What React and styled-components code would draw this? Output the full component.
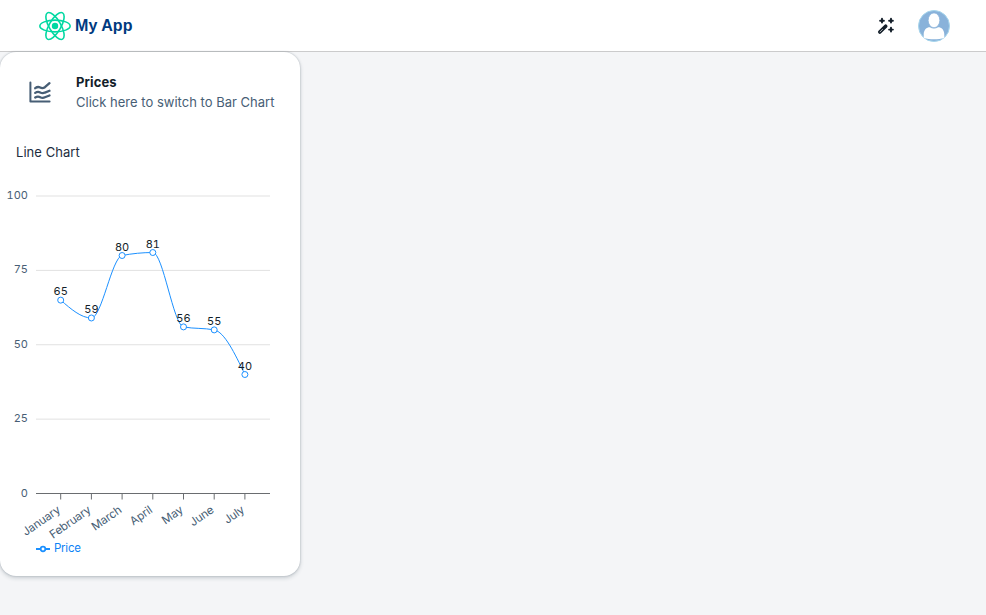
import React from "react";
import styled, { createGlobalStyle } from "styled-components";

const GlobalStyle = createGlobalStyle`
  *, *::before, *::after { box-sizing: border-box; }
  body {
    margin: 0;
    min-height: 100vh;
    background: #f4f5f7;
    color: #1d2d3e;
    font-family: Inter, "Liberation Sans", sans-serif;
  }
`;

const Bar = styled.header`
  display: flex;
  align-items: center;
  height: 52px;
  padding: 0 36px 0 39px;
  background: #fff;
  border-bottom: 1px solid #cbcbcc;
`;

const Brand = styled.div`
  display: flex;
  align-items: center;
  gap: 4px;
  margin-right: auto;
`;

const BrandTitle = styled.h1`
  margin: 0;
  color: #003a80;
  font: 700 16px/20px "Liberation Sans", Arial, sans-serif;
  letter-spacing: 0.05px;
`;

const ToolButton = styled.button`
  display: flex;
  padding: 0;
  margin-right: 23px;
  border: 0;
  background: none;
  color: #131e29;
`;

const Avatar = styled.svg`
  display: block;
  width: 32px;
  height: 32px;
`;

const Card = styled.section`
  width: 300px;
  height: 524px;
  overflow: hidden;
  background: #fff;
  border-radius: 16px;
  box-shadow: 0 0 2px rgba(34, 53, 72, 0.3), 0 2px 4px rgba(34, 53, 72, 0.2);
`;

const CardHeader = styled.div`
  display: flex;
  gap: 24px;
  height: 84px;
  padding: 20px 16px 0 28px;
`;

const HeaderIcon = styled.svg`
  display: block;
  width: 24px;
  height: 24px;
  margin-top: 8px;
`;

const CardTitle = styled.h2`
  margin: 0;
  color: #131e29;
  font-size: 13px;
  line-height: 20px;
  font-weight: 700;
  letter-spacing: 0.1px;
`;

const CardSubtitle = styled.div`
  color: #475e75;
  font-size: 13px;
  line-height: 20px;
  letter-spacing: 0.01px;
  white-space: nowrap;
`;

const ChartTitle = styled.div`
  padding: 6px 16px 0;
  color: #1d2d3e;
  font-size: 13px;
  line-height: 20px;
  letter-spacing: 0.05px;
`;

const Chart = styled.svg`
  display: block;
  width: 300px;
  height: 400px;
  font-size: 11px;
  font-feature-settings: "tnum";
`;

const GridLine = styled.line`
  stroke: #e1e1e1;
`;

const AxisLine = styled.line`
  stroke: #6a6d70;
`;

const AxisText = styled.text`
  fill: #475e75;
  text-anchor: end;
`;

const SlantedText = styled(AxisText)`
  font-size: 11.5px;
  letter-spacing: -0.15px;
`;

const ValueText = styled.text`
  fill: #131e29;
  text-anchor: middle;
`;

const Curve = styled.path`
  fill: none;
  stroke: #1b90ff;
`;

const Dot = styled.circle`
  fill: #fff;
  stroke: #1b90ff;
`;

const LegendText = styled.text`
  fill: #0f83f5;
  font-size: 11.5px;
  letter-spacing: -0.25px;
`;

const prices = [
  ["January", 65],
  ["February", 59],
  ["March", 80],
  ["April", 81],
  ["May", 56],
  ["June", 55],
  ["July", 40],
];

// Vertical position of the zero line, and the height of one unit of price.
const BASE = 331.5;
const SCALE = 2.975;
const points = prices.map(([label, value], i) => ({
  label,
  value,
  x: 60.7 + i * 30.7,
  y: BASE - value * SCALE,
}));

// Monotone cubic interpolation through the data points.
function monotonePath(pts) {
  const slopes = pts.slice(1).map((p, i) => (p.y - pts[i].y) / (p.x - pts[i].x));
  const tangents = pts.map((p, i) => {
    if (i === 0 || i === pts.length - 1) return null;
    const a = slopes[i - 1];
    const b = slopes[i];
    return (Math.sign(a) + Math.sign(b)) *
      Math.min(Math.abs(a), Math.abs(b), 0.5 * Math.abs((a + b) / 2));
  });
  const last = pts.length - 1;
  tangents[0] = (3 * slopes[0] - tangents[1]) / 2;
  tangents[last] = (3 * slopes[last - 1] - tangents[last - 1]) / 2;
  return pts.slice(1).reduce((d, p, i) => {
    const q = pts[i];
    const dx = (p.x - q.x) / 3;
    return `${d}C${q.x + dx},${q.y + dx * tangents[i]} ${p.x - dx},${p.y - dx * tangents[i + 1]} ${p.x},${p.y}`;
  }, `M${pts[0].x},${pts[0].y}`);
}

function ReactLogo() {
  return (
    <svg width="32" height="30" viewBox="-11.5 -10.8 23 21.6" fill="none" stroke="#00d8a2" strokeWidth="1.15">
      <circle r="2.3" fill="#00d8a2" stroke="none" />
      {[0, 60, 120].map((a) => (
        <ellipse key={a} rx="10.9" ry="4.2" transform={`rotate(${a})`} />
      ))}
    </svg>
  );
}

function WandIcon() {
  return (
    <svg width="18" height="18" viewBox="0 0 18 18" fill="none" stroke="currentColor" strokeLinecap="round">
      <path d="M2.800 15.100 8.700 9.200" strokeWidth="3.6" />
      <path d="M3 14.900 5.500 12.400" stroke="#fff" strokeWidth=".7" />
      <path d="M5 1.800v3.800M3.100 3.700h3.800M14 1.800v3.800M12.100 3.700h3.800M14 10.700v3.800M12.100 12.600h3.800" strokeWidth="1.9" />
    </svg>
  );
}

function LineChart() {
  return (
    <Chart>
      {[100, 75, 50, 25, 0].map((v) => (
        <g key={v}>
          {v > 0 && <GridLine x1="36" x2="270" y1={BASE - v * SCALE} y2={BASE - v * SCALE} />}
          <AxisText x="28" y={BASE - v * SCALE + 3}>{v}</AxisText>
        </g>
      ))}
      <AxisLine x1="36" x2="270" y1={BASE} y2={BASE} />
      {points.map(({ x, label }) => (
        <g key={label}>
          <AxisLine x1={x} x2={x} y1={BASE} y2={BASE + 6} />
          <SlantedText transform={`translate(${x - 4.3} ${BASE + 11.5}) rotate(-35)`} dy=".71em">{label}</SlantedText>
        </g>
      ))}
      <Curve d={monotonePath(points)} />
      {points.map(({ x, y, label, value }) => (
        <g key={label}>
          <Dot cx={x} cy={y} r="3" />
          <ValueText x={x} y={y - 5}>{value}</ValueText>
        </g>
      ))}
      <path d="M36 387h4.7M45.3 387H50" stroke="#1b90ff" strokeWidth="2" />
      <circle cx="43" cy="387" r="2.3" fill="none" stroke="#1b90ff" strokeWidth="1.7" />
      <LegendText x="54" y="390">Price</LegendText>
    </Chart>
  );
}

export default function App() {
  return (
    <>
      <GlobalStyle />
      <Bar>
        <Brand>
          <ReactLogo />
          <BrandTitle>My App</BrandTitle>
        </Brand>
        <ToolButton aria-label="Assistant"><WandIcon /></ToolButton>
        <Avatar viewBox="0 0 32 32">
          <circle cx="16" cy="16" r="15.5" fill="#89b2da" stroke="#a6d5ec" />
          <path d="M5.7 27.800v-3.300c0-4.800 2.800-7.300 6.200-7.300 2.400 1.700 5.800 1.700 8.200 0 3.400 0 6.200 2.500 6.200 7.300v3.300c-5.800 2-14.800 2-20.600 0Z" fill="#fff" />
          <ellipse cx="16" cy="10.3" rx="5.8" ry="7.4" fill="#fff" stroke="#89b2da" strokeWidth=".7" />
        </Avatar>
      </Bar>
      <Card>
        <CardHeader>
          <HeaderIcon viewBox="0 0 24 24" fill="none" stroke="#475e75" strokeWidth="2" strokeLinecap="round" strokeLinejoin="round">
            <path d="M2.4 2.5v19h19.2" />
            <path strokeWidth="2.3" d="M7.200 8.200q2.600-2 5-.7t4.700-.3L21.500 3.200M7.200 12.900q2.600-1.700 5-.4t4.700.1l4.600-1.800M7.200 17.500q2.600-1.600 5-.3t4.700.1l4.600-1.800" />
          </HeaderIcon>
          <div>
            <CardTitle>Prices</CardTitle>
            <CardSubtitle>Click here to switch to Bar Chart</CardSubtitle>
          </div>
        </CardHeader>
        <ChartTitle>Line Chart</ChartTitle>
        <LineChart />
      </Card>
    </>
  );
}
